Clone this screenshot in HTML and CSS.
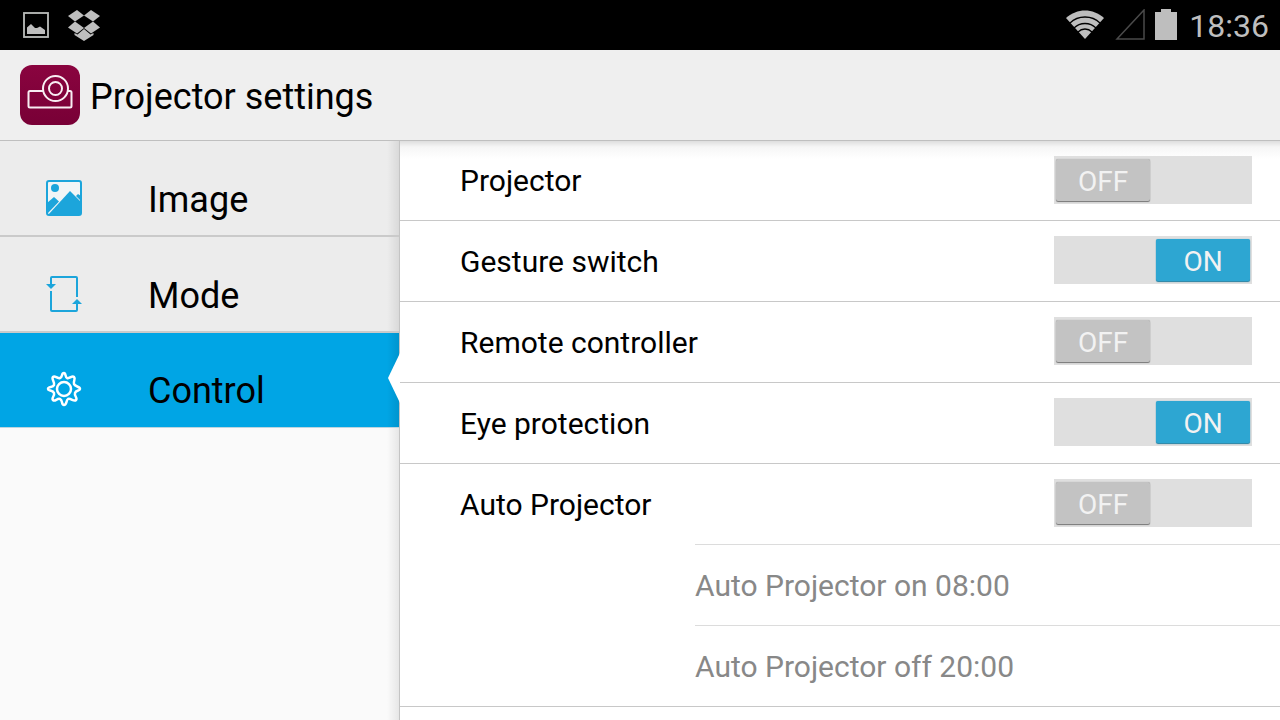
FILE: index.html
```
<!DOCTYPE html>
<html lang="en">
<head>
    <meta charset="UTF-8">
    <meta name="viewport" content="width=device-width, initial-scale=1.0">
    <title>Projector settings</title>
    <link rel="stylesheet" href="styles.css">
</head>
<body>
    <div class="status-bar">
        <div class="status-group notifications">
            <svg width="26" height="26" viewBox="0 0 26 26" aria-hidden="true">
                <rect x="1" y="1" width="24" height="24" fill="none" stroke="#8f918f" stroke-width="2"/>
                <rect x="1" y="1" width="24" height="24" fill="none" stroke="#c4c6c4" stroke-width="1"/>
                <path d="M4 22V15.500L8 12L12 16H14L17 14.500L22 18V22Z" fill="#bebebe"/>
            </svg>
            <svg width="32" height="31" viewBox="0 0 32 31" fill="#bebebe" aria-hidden="true">
                <path d="M9 0L16 5.500L7 11.500L0 6Z"/>
                <path d="M23 0L32 6L25 11.500L16 5.500Z"/>
                <path d="M7 11.500L16 18L9 23.500L0 17.500Z"/>
                <path d="M25 11.500L32 17.500L23 23.500L16 18Z"/>
                <path d="M16 19L9.500 24.500L6.500 23V25L16 31L25.500 25V23L22.500 24.500Z"/>
            </svg>
        </div>
        <div class="status-group indicators">
            <svg width="40" height="30" viewBox="0 0 40 30" aria-hidden="true">
                <path d="M20 29L1 8C12 -2 28 -2 39 8Z" fill="#bebebe"/>
                <g fill="none" stroke="#000" stroke-width="1.300">
                    <path d="M5 13C13 5 27 5 35 13"/>
                    <path d="M9 18C15 12 25 12 31 18"/>
                    <path d="M13 22C17 18 23 18 27 22"/>
                </g>
            </svg>
            <svg width="30" height="32" viewBox="0 0 30 32" aria-hidden="true">
                <path d="M2 30L29 1V30Z" fill="none" stroke="#4a4a4a" stroke-width="1.500"/>
            </svg>
            <svg width="22" height="32" viewBox="0 0 22 32" aria-hidden="true">
                <path d="M6 0H16V3H22V31H0V3H6Z" fill="#bebebe"/>
            </svg>
            <time class="clock">18:36</time>
        </div>
    </div>

    <header class="title-bar">
        <svg width="60" height="60" viewBox="0 0 60 60" aria-hidden="true">
            <defs>
                <linearGradient id="app-bg" x1="0" y1="0" x2="0" y2="1">
                    <stop offset="0" stop-color="#8a043f"/>
                    <stop offset="1" stop-color="#780036"/>
                </linearGradient>
            </defs>
            <rect width="60" height="60" rx="12" fill="url(#app-bg)"/>
            <g fill="none" stroke="#f8edf2" stroke-width="2">
                <path d="M24 26H10Q8.500 26 8.500 27.500V41Q8.500 42.500 10 42.500H50Q51.500 42.500 51.500 41V27.500Q51.500 26 50 26H47"/>
                <circle cx="35.500" cy="23.500" r="12.500"/>
                <circle cx="35.500" cy="23.500" r="6.500"/>
            </g>
        </svg>
        <h1>Projector settings</h1>
    </header>

    <div class="layout">
        <nav class="sidebar">
            <a class="nav-item" href="#image">
                <svg width="36" height="36" viewBox="0 0 36 36" aria-hidden="true">
                    <rect x="1" y="1" width="34" height="34" rx="2" fill="#f1f5f6" stroke="#1ca5db" stroke-width="2"/>
                    <circle cx="9" cy="8" r="4" fill="#1ca5db"/>
                    <path d="M1 23L8 17L13 21.500L1 34Z" fill="#1ca5db"/>
                    <path d="M2 35L24 11L35 22V35Z" fill="#1ca5db"/>
                    <path d="M30 16L32 14L35 16V21Z" fill="#1ca5db"/>
                </svg>
                <span>Image</span>
            </a>
            <a class="nav-item" href="#mode">
                <svg width="36" height="36" viewBox="0 0 36 36" aria-hidden="true">
                    <g fill="none" stroke="#1ca5db" stroke-width="2">
                        <path d="M5 9V2Q5 1 6 1H30Q31 1 31 2V21"/>
                        <path d="M5 15V34Q5 35 6 35H30Q31 35 31 34V27"/>
                    </g>
                    <path d="M0 8H10L5 13Z" fill="#1ca5db"/>
                    <path d="M26 28H36L31 23Z" fill="#1ca5db"/>
                </svg>
                <span>Mode</span>
            </a>
            <a class="nav-item active" href="#control" aria-current="page">
                <svg width="36" height="36" viewBox="0 0 36 36" aria-hidden="true">
                    <g fill="none" stroke="#fff" stroke-width="2.500" stroke-linejoin="round">
                        <path d="M18 2C20 2 19 6 21 7C24 8 26 4 28 6C30 8 27 10 28 13C29 16 34 15 34 18C34 20 30 19 29 22C28 25 32 27 30 29C28 31 25 27 22 28C20 29 21 34 18 34C15 34 17 29 14 28C11 27 9 31 7 29C5 27 9 25 8 22C7 19 2 20 2 18C2 15 7 17 8 14C9 11 5 8 7 6C9 4 11 8 14 7C17 6 15 2 18 2Z"/>
                        <circle cx="18" cy="18" r="7"/>
                    </g>
                </svg>
                <span>Control</span>
            </a>
        </nav>

        <main class="settings">
            <div class="row">
                <label for="projector">Projector</label>
                <span class="switch">
                    <input type="checkbox" id="projector">
                    <span class="thumb off">OFF</span>
                    <span class="thumb on">ON</span>
                </span>
            </div>
            <div class="row">
                <label for="gesture">Gesture switch</label>
                <span class="switch">
                    <input type="checkbox" id="gesture" checked>
                    <span class="thumb off">OFF</span>
                    <span class="thumb on">ON</span>
                </span>
            </div>
            <div class="row">
                <label for="remote">Remote controller</label>
                <span class="switch">
                    <input type="checkbox" id="remote">
                    <span class="thumb off">OFF</span>
                    <span class="thumb on">ON</span>
                </span>
            </div>
            <div class="row">
                <label for="eye">Eye protection</label>
                <span class="switch">
                    <input type="checkbox" id="eye" checked>
                    <span class="thumb off">OFF</span>
                    <span class="thumb on">ON</span>
                </span>
            </div>
            <div class="row auto">
                <label for="auto">Auto Projector</label>
                <span class="switch">
                    <input type="checkbox" id="auto">
                    <span class="thumb off">OFF</span>
                    <span class="thumb on">ON</span>
                </span>
            </div>
            <div class="schedule">
                <button type="button">Auto Projector on 08:00</button>
                <button type="button">Auto Projector off 20:00</button>
            </div>
        </main>
    </div>
</body>
</html>
```

FILE: styles.css
```
* {
    box-sizing: border-box;
}

body {
    margin: 0;
    height: 100vh;
    display: flex;
    flex-direction: column;
    overflow: hidden;
    font-family: Roboto, sans-serif;
    background-color: #fff;
    color: #000;
}

svg {
    display: block;
    flex: none;
}

/* Status bar */
.status-bar {
    flex: none;
    height: 50px;
    padding: 0 11px 0 23px;
    display: flex;
    justify-content: space-between;
    align-items: center;
    background-color: #000;
    color: #bebebe;
}

.status-group {
    display: flex;
    align-items: center;
}

.notifications {
    gap: 19px;
}

.indicators {
    gap: 10px;
}

.clock {
    font-size: 32px;
    line-height: 48px;
    margin-left: 2px;
    padding-top: 2px;
}

/* Title bar */
.title-bar {
    flex: none;
    height: 91px;
    padding: 0 20px;
    display: flex;
    align-items: center;
    gap: 10px;
    background-color: #efefef;
    border-bottom: 1px solid #bfbfbf;
}

h1 {
    margin: 0;
    padding-top: 4px;
    font-size: 36px;
    line-height: 48px;
    font-weight: normal;
}

.layout {
    flex: 1;
    min-height: 0;
    display: grid;
    grid-template-columns: 5fr 11fr;
}

/* Sidebar */
.sidebar {
    background: linear-gradient(to left, rgba(0, 0, 0, 0.08), transparent 12px) #fafafa;
    border-right: 1px solid #c4c4c4;
}

.nav-item {
    position: relative;
    height: 96px;
    padding: 20px 46px 0;
    display: flex;
    align-items: center;
    gap: 66px;
    background: linear-gradient(to left, rgba(0, 0, 0, 0.08), transparent 12px) #ececec;
    border-bottom: 2px solid #cacaca;
    color: #000;
    font-size: 36px;
    line-height: 48px;
    text-decoration: none;
}

.nav-item span {
    padding-top: 4px;
}

.nav-item.active {
    height: 95px;
    padding-top: 18px;
    background: linear-gradient(to left, rgba(0, 0, 0, 0.1), transparent 12px) #00a5e5;
    border-bottom: 1px solid #bcd5df;
}

/* Notch that points from the settings list to the open section */
.nav-item.active::after {
    content: "";
    position: absolute;
    top: 20px;
    right: -1px;
    width: 12px;
    height: 50px;
    background-color: #fff;
    clip-path: polygon(100% 0, 0 50%, 100% 100%);
}

/* Settings list */
.settings {
    background: linear-gradient(#dedede, #f6f6f6 6px, #fff 18px);
}

.row {
    height: 81px;
    padding: 0 28px 2px 60px;
    display: flex;
    justify-content: space-between;
    align-items: center;
    border-bottom: 1px solid #c8c8c8;
    font-size: 30px;
    line-height: 40px;
}

.row label {
    padding-top: 3px;
}

.row:first-child {
    height: 80px;
}

.row.auto {
    height: 80px;
    border-bottom: none;
}

.schedule {
    padding-left: 295px;
    border-bottom: 1px solid #c8c8c8;
}

.schedule button {
    display: block;
    width: 100%;
    height: 81px;
    padding: 2px 0 0;
    border: none;
    border-top: 1px solid #dcdcdc;
    background: none;
    color: #888;
    font: inherit;
    font-size: 30px;
    line-height: 40px;
    text-align: left;
    cursor: pointer;
}

/* Switch */
.switch {
    position: relative;
    width: 198px;
    height: 48px;
    padding: 3px 2px;
    display: flex;
    background-color: #dfdfdf;
    font-size: 28px;
    line-height: 45px;
    text-align: center;
    color: #f2f2f2;
}

.switch input {
    position: absolute;
    inset: 0;
    width: 100%;
    height: 100%;
    margin: 0;
    opacity: 0;
    cursor: pointer;
}

.thumb {
    width: 94px;
    height: 42px;
    border-radius: 2px;
    pointer-events: none;
}

.thumb.off {
    background-color: #c3c3c3;
    box-shadow: 0 1px 1px #777, 0 0 1px #999;
}

.thumb.on {
    display: none;
    margin-left: auto;
    background-color: #2da6d2;
    box-shadow: 0 1px 1px #2381a4, 0 0 1px #5ab0cf;
}

.switch input:checked ~ .off {
    display: none;
}

.switch input:checked ~ .on {
    display: block;
}
```
